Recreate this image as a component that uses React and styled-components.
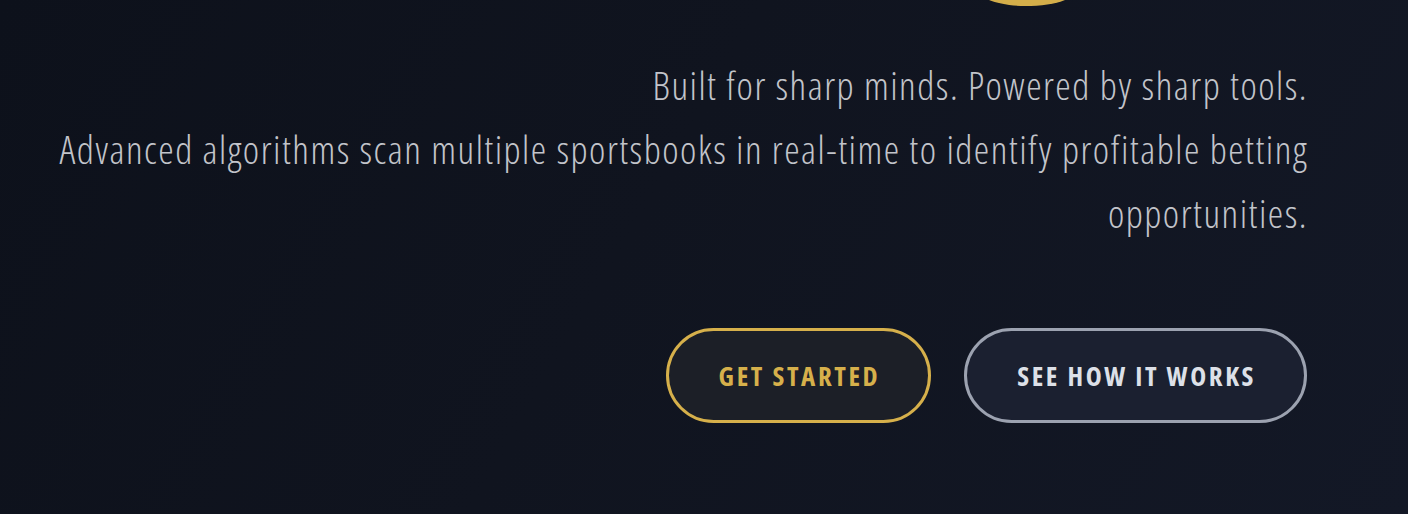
import styled, { createGlobalStyle } from "styled-components";

const GlobalStyle = createGlobalStyle`
  html, body {
    margin: 0;
    height: 100%;
  }

  body {
    background: linear-gradient(120deg, #0d111b 0%, #10141f 45%, #131826 100%);
    font-family: "Open Sans", "DejaVu Sans", sans-serif;
  }
`;

const Hero = styled.section`
  min-height: 514px;
  box-sizing: border-box;
  padding: 0 101px 0 40px;
  display: flex;
  flex-direction: column;
  align-items: flex-end;
  overflow: hidden;
`;

// tail of the headline glyph that sits just above this crop
const TitleTail = styled.svg`
  display: block;
  width: 76px;
  height: 6px;
  margin-right: 242px;
`;

const Tagline = styled.p`
  margin: 47px -1px 0 0;
  max-width: 1260px;
  text-align: right;
  color: #c2c4ca;
  font-weight: 300;
  font-stretch: condensed;
  font-size: 39px;
  line-height: 64px;
  letter-spacing: 1.5px;
`;

const TagLine = styled.span`
  display: block;
`;

const Actions = styled.div`
  display: flex;
  gap: 33px;
  margin-top: 83px;
`;

const PillButton = styled.button`
  height: 95px;
  box-sizing: border-box;
  padding: 0 48px 0 50px;
  border-radius: 48px;
  border: 3px solid ${(p) => (p.$primary ? "#d6b04b" : "#9ca2b0")};
  background: ${(p) => (p.$primary ? "#1c1f27" : "#1b2030")};
  color: ${(p) => (p.$primary ? "#d6b04b" : "#dde0e8")};
  font-family: "Open Sans", "DejaVu Sans", sans-serif;
  font-weight: 700;
  font-stretch: condensed;
  font-size: 27px;
  letter-spacing: 2.6px;
  text-transform: uppercase;
  cursor: pointer;
`;

function App() {
  return (
    <>
      <GlobalStyle />
      <Hero>
        <TitleTail viewBox="0 0 76 6" aria-hidden="true">
          <path d="M0 0 H76 C66 4 52 6 36 6 C20 6 8 3 0 0 Z" fill="#d4ae4a" />
        </TitleTail>
        <Tagline>
          <TagLine>Built for sharp minds. Powered by sharp tools.</TagLine>
          <TagLine>
            Advanced algorithms scan multiple sportsbooks in real-time to identify profitable betting opportunities.
          </TagLine>
        </Tagline>
        <Actions>
          <PillButton $primary>Get Started</PillButton>
          <PillButton>See How It Works</PillButton>
        </Actions>
      </Hero>
    </>
  );
}

export default App;
